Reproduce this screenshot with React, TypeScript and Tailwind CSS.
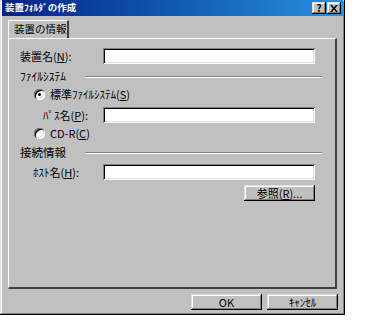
import React from "react";

const font = { fontFamily: '"MS UI Gothic", "Noto Sans CJK JP", sans-serif' };

const raised =
  "shadow-[inset_-1px_-1px_#000,inset_1px_1px_#dfdfdf,inset_-2px_-2px_#808080,inset_2px_2px_#fff]";
const sunken =
  "shadow-[inset_1px_1px_#808080,inset_-1px_-1px_#fff,inset_2px_2px_#000,inset_-2px_-2px_#dfdfdf]";

function Field() {
  return <div className={`h-4 w-[212px] bg-white ${sunken}`} />;
}

function Btn({ children }: { children: React.ReactNode }) {
  return (
    <div
      className={`flex h-4 w-[71px] items-center justify-center bg-[#c0c0c0] text-[11px] leading-none text-black ${raised}`}
    >
      {children}
    </div>
  );
}

function Group({ title }: { title: string }) {
  return (
    <div className="flex h-3 items-center pr-[13px]">
      <span className="text-[11.5px] leading-none">{title}</span>
      <div className="ml-[19px] h-[2px] flex-1 border-t border-b border-t-[#808080] border-b-white" />
    </div>
  );
}

function Radio({ checked, children }: { checked?: boolean; children: React.ReactNode }) {
  return (
    <div className="flex h-[14px] items-center pl-[14px]">
      <div className={`relative h-[11px] w-[11px] rounded-full bg-white ${sunken}`}>
        {checked && <div className="absolute left-[4px] top-[4px] h-[3px] w-[3px] rounded-full bg-black" />}
      </div>
      <span className="ml-[5px] text-[11px] leading-none">{children}</span>
    </div>
  );
}

export default function App() {
  return (
    <div className="h-[321px] w-[378px] bg-white" style={font}>
      <div className={`flex h-[315px] w-[345px] flex-col bg-[#c0c0c0] px-[2px] text-black ${raised}`}>
        <div className="flex h-4 items-center justify-between bg-gradient-to-r from-[#0a1f86] to-[#2a90e0] pl-[3px] pr-[2px]">
          <span className="text-[9.5px] font-bold leading-none text-white">装置ﾌｫﾙﾀﾞの作成</span>
          <div className="flex gap-[1px]">
            <div className={`flex h-[12px] w-[14px] items-center justify-center bg-[#c0c0c0] text-[10px] font-bold leading-none ${raised}`}>
              ?
            </div>
            <div className={`flex h-[12px] w-[14px] items-center justify-center bg-[#c0c0c0] ${raised}`}>
              <svg width="8" height="7" viewBox="0 0 8 7">
                <path d="M0 0h2l2 2.5L6 0h2L5 3.5 8 7H6L4 4.5 2 7H0l3-3.5z" fill="#000" />
              </svg>
            </div>
          </div>
        </div>

        <div className="ml-[6px] mt-[4px] flex">
          <div className="flex h-[18px] w-[61px] items-center whitespace-nowrap border-l border-t border-r-2 border-l-white border-t-white border-r-[#404040] pl-[5px] text-[10.5px] leading-none">
            装置の情報
          </div>
        </div>

        <div className="ml-[6px] flex h-[251px] w-[329px] flex-col border border-b-2 border-r-2 border-l-white border-t-white border-b-[#404040] border-r-[#404040] pl-[11px] pt-[9px]">
          <div className="flex items-center">
            <span className="w-[83px] text-[11px] leading-none">装置名(<u>N</u>):</span>
            <Field />
          </div>
          <div className="mt-[7px]">
            <Group title="ﾌｧｲﾙｼｽﾃﾑ" />
          </div>
          <div className="mt-[4px]">
            <Radio checked>
              標準ﾌｧｲﾙｼｽﾃﾑ(<u>S</u>)
            </Radio>
          </div>
          <div className="mt-[6px] flex items-center">
            <span className="w-[83px] pl-[23px] text-[11px] leading-none">ﾊﾟｽ名(<u>P</u>):</span>
            <Field />
          </div>
          <div className="mt-[3px]">
            <Radio>
              CD-R(<u>C</u>)
            </Radio>
          </div>
          <div className="mt-[7px]">
            <Group title="接続情報" />
          </div>
          <div className="mt-[5px] flex items-center">
            <span className="w-[83px] pl-[13px] text-[11px] leading-none">ﾎｽﾄ名(<u>H</u>):</span>
            <Field />
          </div>
          <div className="mt-[5px] flex w-[295px] justify-end">
            <Btn>
              参照(<u>R</u>)...
            </Btn>
          </div>
        </div>

        <div className="mt-[5px] flex justify-end gap-[5px] pr-[5px]">
          <Btn>OK</Btn>
          <Btn>ｷｬﾝｾﾙ</Btn>
        </div>
      </div>
    </div>
  );
}
